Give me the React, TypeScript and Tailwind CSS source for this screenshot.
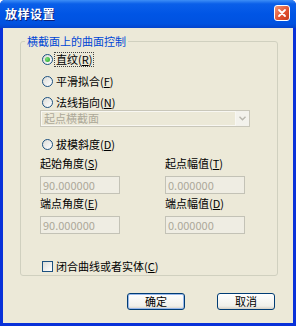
import React from 'react';

const FONT = { fontFamily: 'Tahoma, "Noto Sans CJK SC", "DejaVu Sans", sans-serif' };

// label text with the mnemonic letter underlined, e.g. 直纹(R)
const Mnemonic: React.FC<{ text: string; k: string }> = ({ text, k }) => (
  <span>
    {text}(<span className="underline underline-offset-1">{k}</span>)
  </span>
);

const Radio: React.FC<{ checked?: boolean; text: string; k: string; focused?: boolean }> = ({
  checked,
  text,
  k,
  focused,
}) => (
  <div className="flex items-center h-[13px] ml-[2px]">
    <span className="w-[11px] h-[11px] rounded-full border border-[#1c5180] bg-[linear-gradient(135deg,#dcdcd7,#ffffff)] flex items-center justify-center shrink-0">
      {checked && (
        <span className="w-[5px] h-[5px] rounded-full bg-[radial-gradient(circle_at_35%_35%,#7be07b,#21a121)]" />
      )}
    </span>
    <span
      className={`ml-[2px] px-[1px] text-[11px] leading-[13px] text-black ${
        focused ? 'outline outline-1 outline-dotted outline-[#444]' : ''
      }`}
    >
      <Mnemonic text={text} k={k} />
    </span>
  </div>
);

const DisabledInput: React.FC<{ value: string }> = ({ value }) => (
  <div className="w-[80px] h-[18px] border border-[#c3c2b6] bg-[#efede3] flex items-center pl-[2px] text-[11px] text-[#aca899]">
    {value}
  </div>
);

const XPButton: React.FC<{ label: string; isDefault?: boolean }> = ({ label, isDefault }) => (
  <button
    className={`w-[58px] h-[17px] rounded-[3px] border border-[#003c74] bg-[linear-gradient(to_bottom,#ffffff,#f0f0ea_80%,#d6d0c5)] text-[11px] leading-none text-black flex items-center justify-center ${
      isDefault ? 'shadow-[inset_0_0_0_1px_#98b8ea]' : ''
    }`}
  >
    {label}
  </button>
);

export default function App() {
  return (
    <div style={FONT} className="w-[296px] h-[326px] flex flex-col bg-[#0831d9] rounded-t-[5px] overflow-hidden">
      {/* Title bar */}
      <div className="h-[28px] shrink-0 flex items-center justify-between px-[5px] bg-[linear-gradient(to_bottom,#3d8ef6_0%,#0a5fe9_14%,#0055e5_50%,#0052e0_85%,#0444cc_100%)]">
        <span className="text-white font-bold text-[12px] tracking-[0.5px] [text-shadow:1px_1px_0_#0a1f7a]">
          放样设置
        </span>
        <div className="w-[16px] h-[16px] mt-[-3px] mr-[1px] rounded-[3px] border border-white bg-[linear-gradient(135deg,#f29677,#e0502e_60%,#c53a1c)] flex items-center justify-center">
          <svg width="10" height="10" viewBox="0 0 10 10">
            <path d="M2 2 L8 8 M8 2 L2 8" stroke="white" strokeWidth="1.8" strokeLinecap="round" />
          </svg>
        </div>
      </div>

      {/* Body */}
      <div className="flex-1 mx-[3px] mb-[3px] bg-[#ece9d8] pt-[7px] pl-[17px]">
        <fieldset className="w-[258px] h-[241px] border border-[#d0d0bf] rounded-[3px] pl-[19px] pt-[5px]">
          <legend className="ml-[-15px] px-[2px] text-[11px] leading-[13px] text-[#0046d5]">
            横截面上的曲面控制
          </legend>

          <Radio checked focused text="直纹" k="R" />
          <div className="mt-[9px]">
            <Radio text="平滑拟合" k="F" />
          </div>
          <div className="mt-[8px]">
            <Radio text="法线指向" k="N" />
          </div>

          {/* disabled combo */}
          <div className="mt-[1px] w-[210px] h-[17px] border border-[#c9c7ba] bg-[#ece9d8] flex">
            <div className="flex-1 border border-[#f8f7f2] flex items-center pl-[2px] text-[11px] text-[#aca899]">
              起点横截面
            </div>
            <div className="w-[13px] bg-[#f3f2ec] flex items-center justify-center">
              <svg width="7" height="5" viewBox="0 0 7 5">
                <path d="M0.5 0.8 L3.5 3.8 L6.5 0.8" fill="none" stroke="#b9b7ae" strokeWidth="1.4" />
              </svg>
            </div>
          </div>

          <div className="mt-[11px]">
            <Radio text="拔模斜度" k="D" />
          </div>

          <div className="mt-[6px] flex gap-[45px]">
            <div className="flex flex-col">
              <span className="h-[13px] text-[11px] leading-[13px] text-black">
                <Mnemonic text="起始角度" k="S" />
              </span>
              <div className="mt-[6px]">
                <DisabledInput value="90.000000" />
              </div>
              <span className="mt-[3px] h-[13px] text-[11px] leading-[13px] text-black">
                <Mnemonic text="端点角度" k="E" />
              </span>
              <div className="mt-[6px]">
                <DisabledInput value="90.000000" />
              </div>
            </div>
            <div className="flex flex-col">
              <span className="h-[13px] text-[11px] leading-[13px] text-black">
                <Mnemonic text="起点幅值" k="T" />
              </span>
              <div className="mt-[6px]">
                <DisabledInput value="0.000000" />
              </div>
              <span className="mt-[3px] h-[13px] text-[11px] leading-[13px] text-black">
                <Mnemonic text="端点幅值" k="D" />
              </span>
              <div className="mt-[6px]">
                <DisabledInput value="0.000000" />
              </div>
            </div>
          </div>

          {/* checkbox */}
          <div className="mt-[26px] ml-[2px] flex items-center h-[13px]">
            <span className="w-[11px] h-[11px] border border-[#1c5180] bg-[linear-gradient(135deg,#dcdcd7,#ffffff)] shrink-0" />
            <span className="ml-[3px] text-[11px] leading-[13px] text-black">
              <Mnemonic text="闭合曲线或者实体" k="C" />
            </span>
          </div>
        </fieldset>

        <div className="mt-[17px] flex pl-[107px] gap-[32px]">
          <XPButton label="确定" isDefault />
          <XPButton label="取消" />
        </div>
      </div>
    </div>
  );
}
